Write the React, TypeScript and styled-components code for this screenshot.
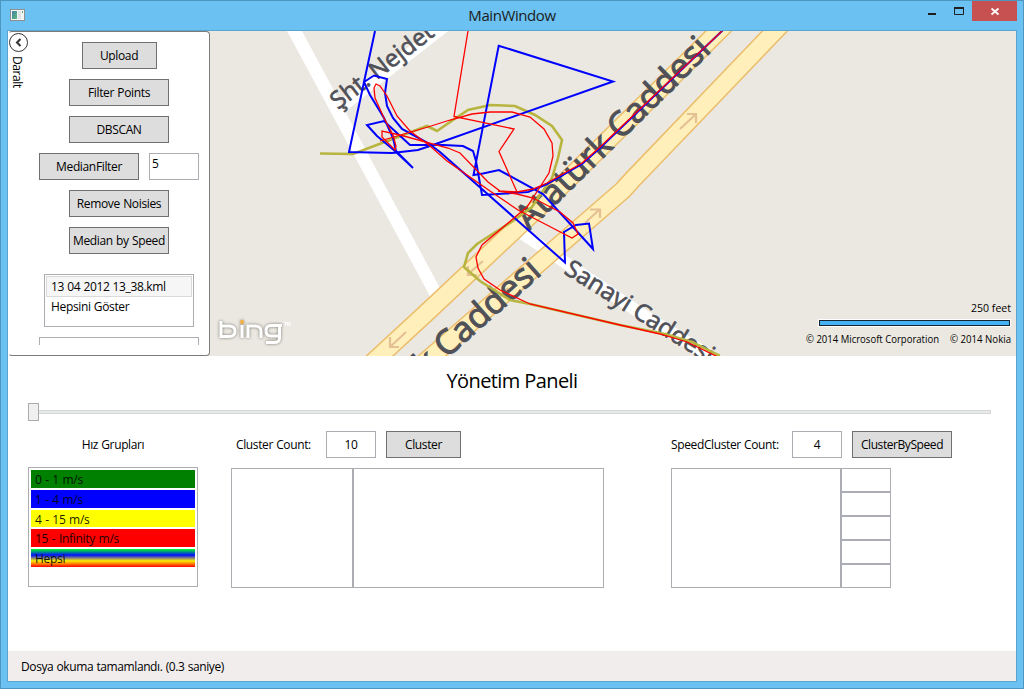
import React from "react";
import styled, { createGlobalStyle } from "styled-components";

const GlobalStyle = createGlobalStyle`
  * { box-sizing: border-box; }
  body { margin: 0; font-family: "Open Sans", "Noto Sans", sans-serif; font-size: 12px; line-height: 16px; color: #000; }
  button, input { font: inherit; color: inherit; }
`;

const Window = styled.div`
  width: 1024px;
  height: 689px;
  display: flex;
  flex-direction: column;
  background: #6ac1f2;
  border: 1px solid #4e96bf;
  padding: 0 6px 6px;
  overflow: hidden;
`;

const TitleBar = styled.header`
  height: 29px;
  flex: none;
  display: grid;
  grid-template-columns: 112px 1fr 112px;
`;

const AppIcon = styled.svg`
  margin: 7px 0 0 3px;
`;

const Title = styled.h1`
  margin: 0;
  font-size: 15px;
  font-weight: 400;
  line-height: 29px;
  text-align: center;
  letter-spacing: -0.42px;
  color: #1c1c1c;
`;

const Controls = styled.div`
  display: flex;
  height: 20px;
  justify-content: flex-end;
`;

const ControlButton = styled.button<{ $width: number; $close?: boolean }>`
  width: ${(p) => p.$width}px;
  height: 20px;
  border: 0;
  padding: 0;
  display: block;
  line-height: 0;
  background: ${(p) => (p.$close ? "#c75050" : "transparent")};
`;

const Client = styled.main`
  flex: 1;
  display: flex;
  flex-direction: column;
  background: #fff;
  border: 1px solid #5aa5d0;
`;

const TopArea = styled.section`
  height: 325px;
  flex: none;
  display: flex;
  background: linear-gradient(#ebe8e1, #ebe8e1) right / 810px 100% no-repeat;
`;

const SidePanel = styled.aside`
  width: 202px;
  height: 325px;
  flex: none;
  display: flex;
  border: 1px solid #7b7b7b;
  border-left-color: #fff;
  border-radius: 4px;
  background: #fff;
`;

const CollapseStrip = styled.div`
  width: 30px;
  display: flex;
  flex-direction: column;
  align-items: flex-start;
`;

const CollapseLabel = styled.span`
  writing-mode: vertical-rl;
  margin: 4px 0 0;
  letter-spacing: -0.4px;
`;

const Tools = styled.div`
  width: 160px;
  height: 313px;
  display: flex;
  flex-direction: column;
  align-items: center;
  gap: 10px;
  padding-top: 10px;
  overflow: hidden;
`;

const Row = styled.div`
  display: flex;
  gap: 10px;
`;

const Button = styled.button<{ $width: number; $track?: number }>`
  width: ${(p) => p.$width}px;
  height: 27px;
  flex: none;
  padding: 0;
  border: 1px solid #707070;
  background: #ddd;
  line-height: 26px;
  text-align: center;
  white-space: nowrap;
  word-spacing: 0.5px;
  letter-spacing: ${(p) => p.$track ?? -0.35}px;
`;

const NumberBox = styled.input<{ $center?: boolean }>`
  width: 50px;
  height: 27px;
  flex: none;
  border: 1px solid #abadb3;
  padding: ${(p) => (p.$center ? "0" : "0 2px 6px")};
  text-align: ${(p) => (p.$center ? "center" : "left")};
  letter-spacing: -0.3px;
  background: #fff;
`;

const FileList = styled.ul`
  width: 150px;
  height: 53px;
  flex: none;
  list-style: none;
  margin: 10px 0 0;
  padding: 1px;
  border: 1px solid #abadb3;
`;

const FileItem = styled.li<{ $selected?: boolean }>`
  height: 21px;
  padding: 0 5px 0 4px;
  line-height: ${(p) => (p.$selected ? 20 : 18)}px;
  white-space: nowrap;
  letter-spacing: -0.35px;
  word-spacing: 0.4px;
  border: 1px solid ${(p) => (p.$selected ? "#dadada" : "transparent")};
  background: ${(p) => (p.$selected ? "#f6f6f6" : "transparent")};
`;

const LogBox = styled.div`
  width: 160px;
  height: 30px;
  flex: none;
  border: 1px solid #abadb3;
`;

const MapCanvas = styled.svg`
  flex: 1;
  display: block;
  background: #ebe8e1;
`;

const PanelTitle = styled.h2`
  margin: 10px 0 0;
  height: 30px;
  font-size: 20px;
  font-weight: 400;
  line-height: 30px;
  text-align: center;
  letter-spacing: -0.6px;
`;

const Slider = styled.div`
  display: flex;
  align-items: center;
  height: 18px;
  margin: 7px 25px 0 20px;
`;

const Thumb = styled.span`
  width: 11px;
  height: 18px;
  border: 1px solid #acacac;
  background: #f0f0f0;
`;

const Track = styled.span`
  flex: 1;
  height: 4px;
  border: 1px solid #d6d6d6;
  border-left: 0;
  background: #e7eaea;
`;

const Groups = styled.section`
  display: flex;
  align-items: flex-start;
  margin: 10px 0 0 20px;
`;

const Group = styled.div<{ $width: number; $gap: number }>`
  width: ${(p) => p.$width}px;
  margin-right: ${(p) => p.$gap}px;
`;

const GroupHeader = styled.div<{ $indent?: number; $centered?: boolean }>`
  display: flex;
  align-items: center;
  justify-content: ${(p) => (p.$centered ? "center" : "flex-start")};
  gap: 10px;
  height: 27px;
  padding-left: ${(p) => p.$indent ?? 0}px;
`;

const Caption = styled.label<{ $width?: number }>`
  width: ${(p) => (p.$width ? `${p.$width}px` : "auto")};
  padding-top: 1px;
  white-space: nowrap;
  word-spacing: 0.4px;
  letter-spacing: -0.37px;
`;

const SpeedList = styled.ul`
  list-style: none;
  margin: 9px 0 0;
  height: 120px;
  padding: 2px;
  display: flex;
  flex-direction: column;
  gap: 2px;
  border: 1px solid #abadb3;
`;

const SpeedItem = styled.li<{ $fill: string }>`
  height: 17.75px;
  padding-left: 4px;
  line-height: 19px;
  letter-spacing: -0.3px;
  word-spacing: 0.8px;
  color: rgba(0, 0, 0, 0.9);
  background: ${(p) => p.$fill};
`;

const Boxes = styled.div`
  display: flex;
  height: 120px;
  margin-top: 10px;
`;

const Box = styled.div<{ $width: number }>`
  width: ${(p) => p.$width}px;
  border: 1px solid #abadb3;
`;

const CellColumn = styled.div`
  width: 50px;
  display: grid;
  grid-template-rows: repeat(5, 24px);
`;

const Cell = styled.div`
  border: 1px solid #abadb3;
`;

const StatusBar = styled.footer`
  margin-top: auto;
  height: 30px;
  padding-left: 13px;
  line-height: 32px;
  background: #f1edec;
  letter-spacing: -0.4px;
  word-spacing: 0.5px;
`;

const speedGroups = [
  { label: "0 - 1 m/s", fill: "#008000" },
  { label: "1 - 4 m/s", fill: "#0000ff" },
  { label: "4 - 15 m/s", fill: "#ffff00" },
  { label: "15 - Infinity m/s", fill: "#ff0000" },
  { label: "Hepsi", fill: "linear-gradient(#00ff20 0%, #0010ff 34%, #ffee00 66%, #ff0000 100%)" },
];

const roadA = "M358 376 L430 309.5 L557 190 L600 148 L740 10";
const roadB = "M409 376 L432 356 L623 190 L632 180 L795 10";

const blueTrack =
  "M375 31 L364 82 L349 152 L392 153 L418 150 L430 146 L613 81.5 L498.700 45.700 L473.500 175 L483 173.500 L499 170 L543 194 L593 249 L589 223.500 L576 225 L564 232 L565 262.500 L440 152 L428 143 L402 129 L393 118 L387 106 L385 93 L387 79 L374 75.500 L364 82 L370 95 L384 118 L393 138 L396 151 L413 168 L395 151 L377 136 L367 125 L384 121 L410 145 L443 145 L463 146 L473 151 L476 161 L482 195 L528 192 L547 184 L582 164 L600 148 L723 30";
const redTrack =
  "M468 31 L454 116.500 L514 129 L499 151.500 L517 192 M380 141 L428 127 L450 120 L472 114 L490 112 L512 112 L530 117 L544 129 L552 143 L553 156 L549 173 L538 190 L527 207 L482 245 L476 257 L478 268 L484 279 L500 290 L530 304 L620 325 L660 334 L687 342 L718 357 M723 30 L600 147 L582 163 L547 183 L533 189 L517 192 L500 191 L488 182 L460 153 L448 148 L400 135 L382 131 L382 137 L395 150 L396 146 L393 135 L384 118 L375 98 L374 88 L376 84 L380 86 L387 96 L397 116 L410 131 L430 146 L447 161 L490 191 L518 210 L543 223 L572 238 L578 234 L573 223 L560 212 L533 198 L517 194 L498 191";
const oliveTrack =
  "M320 153.500 L353 154 L390 140 L427 126 L437 131 L453 120 L468 110 L490 105 L515 106 L535 115 L552 126 L562 140 L558 158 L552 178 L538 198 L532 207 L513 221 L477 244 L468 253 L464 267 L480 281 L510 300 L530 304 L620 325 L665 334 L692 342 L720 356";

function Road({ d }: { d: string }) {
  return (
    <>
      <path d={d} fill="none" stroke="#ecbd6c" strokeWidth="19.500" />
      <path d={d} fill="none" stroke="#fff0bb" strokeWidth="16.500" />
    </>
  );
}

function MapView() {
  return (
    <MapCanvas width="806" height="325" viewBox="210 31 806 325" fontFamily="'Open Sans', sans-serif">
      <path d="M287 31 L302 31 L441 290 L431 298 Z" fill="#fff" />
      <path d="M345 104 L445 26 M520 232 L640 313 L720 362" fill="none" stroke="#fff" strokeWidth="12" />
      <Road d={roadA} />
      <Road d={roadB} />
      <g fill="none" stroke="#e5c094" strokeWidth="2.200">
        <path d="M483 261 L467 275 M468 266 V275 H477" />
        <path d="M406 332 L390 347 M390 337 V347 H399" />
        <path d="M680 129 L696 114 M687 114 H696 V123" />
        <path d="M585 223 L600 209 M590 209.500 H600 V218" />
        <path d="M508 288 L497 300" />
      </g>
      <g fill="#505158" stroke="#505158" strokeWidth="1.100">
        <text transform="translate(529 231) rotate(-44.500)" fontSize="34" textLength="257" lengthAdjust="spacingAndGlyphs">Atatürk Caddesi</text>
        <text transform="translate(426 377) rotate(-41.500)" fontSize="34" textLength="156" lengthAdjust="spacingAndGlyphs">k Caddesi</text>
      </g>
      <g fill="#505158" stroke="#505158" strokeWidth="0.700">
        <text transform="translate(563 273) rotate(32)" fontSize="24" textLength="171" lengthAdjust="spacingAndGlyphs">Sanayi Caddesi</text>
        <text transform="translate(338 110) rotate(-37.500)" fontSize="24" textLength="123" lengthAdjust="spacingAndGlyphs">Şht. Nejdet</text>
      </g>
      <path d={oliveTrack} fill="none" stroke="#b7b53f" strokeWidth="2.600" />
      <path d={blueTrack} fill="none" stroke="#0000ff" strokeWidth="2" />
      <path d={redTrack} fill="none" stroke="#ff0000" strokeWidth="1.300" />
      <g style={{ filter: "drop-shadow(0 0 1.500px #77746c)" }} fill="none" stroke="#fff" strokeWidth="3">
        <path d="M221 321 V336.500 H229 Q235 336.500 235 331 Q235 326 229 326 H221" />
        <path d="M242 325 V338" />
        <path d="M248 338 V326 H255 Q261 326 261 331 V338" />
        <path d="M282 325.500 H271 Q266 325.500 266 330.500 Q266 336 271 336 H279.500 M279.500 326 V338 Q279.500 342.500 274 342.500 H266" />
        <circle cx="242" cy="322" r="2" fill="#f9b03d" stroke="none" />
      </g>
      <text x="284" y="326" fontSize="4.500" fill="#fff" fontWeight="700">TM</text>
      <g fill="#000">
        <text x="971" y="312" fontSize="11" textLength="40" lengthAdjust="spacingAndGlyphs">250 feet</text>
        <text x="806" y="343" fontSize="10" textLength="133" lengthAdjust="spacingAndGlyphs">© 2014 Microsoft Corporation</text>
        <text x="950" y="343" fontSize="10" textLength="61" lengthAdjust="spacingAndGlyphs">© 2014 Nokia</text>
      </g>
      <rect x="818.500" y="319.500" width="192" height="7" fill="none" stroke="#fff" />
      <rect x="819.500" y="320.500" width="190" height="5" fill="#45b1f5" stroke="#15242e" />
    </MapCanvas>
  );
}

export default function App() {
  return (
    <>
      <GlobalStyle />
      <Window>
        <TitleBar>
          <AppIcon width="16" height="16" viewBox="0 0 16 16">
            <defs>
              <linearGradient id="pane" x1="0" y1="0" x2="1" y2="1">
                <stop offset="0" stopColor="#4583a8" />
                <stop offset="1" stopColor="#5fb77c" />
              </linearGradient>
            </defs>
            <rect x="0.500" y="1.500" width="14" height="11" fill="#f4f4f4" stroke="#8d8f91" />
            <rect x="2" y="3" width="5" height="8" fill="url(#pane)" />
            <rect x="8" y="3" width="3" height="8" fill="#dde3e5" />
            <rect x="12" y="3" width="1" height="2" fill="#5fa37e" />
          </AppIcon>
          <Title>MainWindow</Title>
          <Controls>
            <ControlButton $width={27} aria-label="Minimize">
              <svg width="27" height="20"><rect x="10" y="12" width="8" height="2" fill="#1e1e1e" /></svg>
            </ControlButton>
            <ControlButton $width={27} aria-label="Maximize">
              <svg width="27" height="20">
                <path d="M9.500 7 V13.500 H18.500 V7" fill="none" stroke="#1e1e1e" />
                <rect x="9" y="6" width="10" height="2" fill="#1e1e1e" />
              </svg>
            </ControlButton>
            <ControlButton $width={45} $close aria-label="Close">
              <svg width="45" height="20"><path d="M19.500 7.500 L26.500 13.500 M26.500 7.500 L19.500 13.500" stroke="#fff" strokeWidth="1.800" /></svg>
            </ControlButton>
          </Controls>
        </TitleBar>
        <Client>
          <TopArea>
            <SidePanel>
              <CollapseStrip>
                <svg width="20" height="20" viewBox="0 0 20 20">
                  <circle cx="9.500" cy="10.500" r="9" fill="#fff" stroke="#333" />
                  <path d="M11.500 7 L8 10.500 L11.500 14" fill="none" stroke="#333" strokeWidth="2" />
                </svg>
                <CollapseLabel>Daralt</CollapseLabel>
              </CollapseStrip>
              <Tools>
                <Button $width={75}>Upload</Button>
                <Button $width={100}>Filter Points</Button>
                <Button $width={100}>DBSCAN</Button>
                <Row>
                  <Button $width={100}>MedianFilter</Button>
                  <NumberBox defaultValue="5" />
                </Row>
                <Button $width={100}>Remove Noisies</Button>
                <Button $width={100}>Median by Speed</Button>
                <FileList>
                  <FileItem $selected>13 04 2012 13_38.kml</FileItem>
                  <FileItem>Hepsini Göster</FileItem>
                </FileList>
                <LogBox />
              </Tools>
            </SidePanel>
            <MapView />
          </TopArea>
          <PanelTitle>Yönetim Paneli</PanelTitle>
          <Slider>
            <Thumb />
            <Track />
          </Slider>
          <Groups>
            <Group $width={170} $gap={33}>
              <GroupHeader $centered>
                <Caption>Hız Grupları</Caption>
              </GroupHeader>
              <SpeedList>
                {speedGroups.map((g) => (
                  <SpeedItem key={g.label} $fill={g.fill}>{g.label}</SpeedItem>
                ))}
              </SpeedList>
            </Group>
            <Group $width={373} $gap={67}>
              <GroupHeader $indent={5}>
                <Caption $width={80}>Cluster Count:</Caption>
                <NumberBox $center defaultValue="10" />
                <Button $width={75}>Cluster</Button>
              </GroupHeader>
              <Boxes>
                <Box $width={122} />
                <Box $width={251} />
              </Boxes>
            </Group>
            <Group $width={281} $gap={0}>
              <GroupHeader>
                <Caption $width={111}>SpeedCluster Count:</Caption>
                <NumberBox $center defaultValue="4" />
                <Button $width={100} $track={-0.42}>ClusterBySpeed</Button>
              </GroupHeader>
              <Boxes>
                <Box $width={170} />
                <CellColumn>
                  <Cell /><Cell /><Cell /><Cell /><Cell />
                </CellColumn>
              </Boxes>
            </Group>
          </Groups>
          <StatusBar>Dosya okuma tamamlandı. (0.3 saniye)</StatusBar>
        </Client>
      </Window>
    </>
  );
}
